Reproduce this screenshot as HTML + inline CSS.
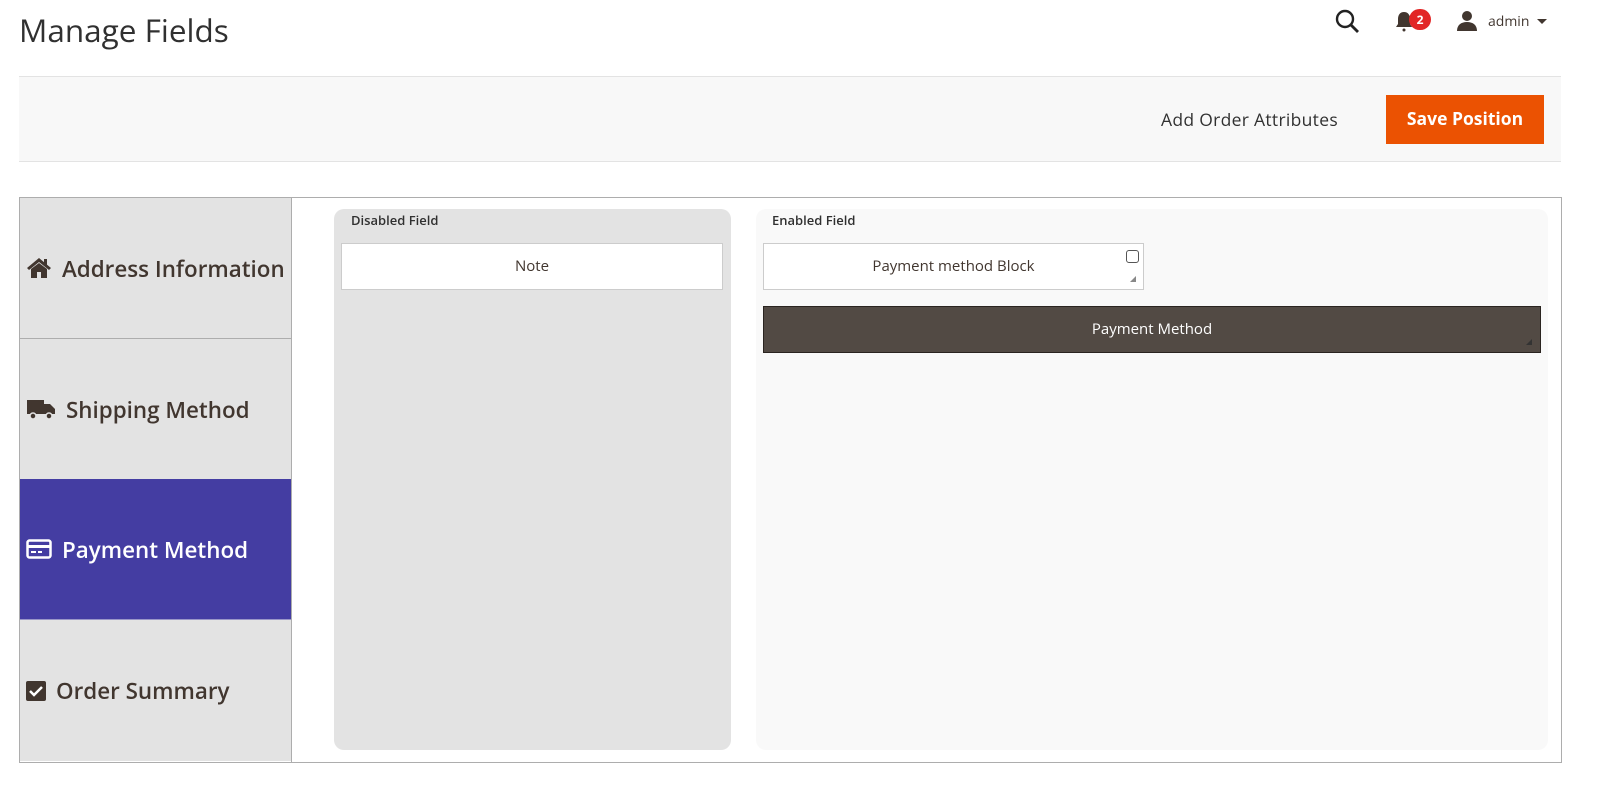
<!DOCTYPE html>
<html><head><meta charset="utf-8"><style>
*{box-sizing:border-box;margin:0;padding:0}
body{width:1600px;height:788px;background:#fff;font-family:"Open Sans","Liberation Sans",sans-serif;color:#41362f;position:relative;overflow:hidden}
.a{position:absolute}
.tab{position:absolute;left:20px;width:271px;height:141px;background:#e3e3e3;border-bottom:1px solid #adadad;display:flex;align-items:center;font-size:22.4px;font-weight:600;color:#41362f}
.tab svg{margin:0 10px 0 6px}
</style></head><body>
<div class="a" style="left:19px;top:9px;font-size:31.5px;color:#303030">Manage Fields</div>
<svg class="a" style="left:1335px;top:9px" width="26" height="26" viewBox="0 0 26 26"><circle cx="10" cy="10" r="8" fill="none" stroke="#222" stroke-width="2.4"/><path d="M16 16l7 7" stroke="#222" stroke-width="2.8"/></svg>
<svg class="a" style="left:1395px;top:11px" width="18" height="22" viewBox="0 0 18 22"><path d="M9 1c-4 0-6 3-6 7v5l-2 3h16l-2-3V8c0-4-2-7-6-7z" fill="#41362f"/><circle cx="9" cy="19" r="1.5" fill="#41362f"/></svg>
<div class="a" style="left:1409px;top:9px;width:22px;height:21px;border-radius:11px;background:#e22626;color:#fff;font-size:12px;font-weight:700;text-align:center;line-height:21px">2</div>
<svg class="a" style="left:1456px;top:10px" width="22" height="22" viewBox="0 0 22 22"><circle cx="11" cy="6" r="5" fill="#41362f"/><path d="M1 21c0-6 4-9 10-9s10 3 10 9z" fill="#41362f"/></svg>
<div class="a" style="left:1488px;top:12px;font-size:14px;color:#41362f">admin</div>
<div class="a" style="left:1537px;top:19px;border:5px solid transparent;border-top:5px solid #41362f"></div>
<div class="a" style="left:19px;top:76px;width:1542px;height:86px;background:#f8f8f8;border-top:1px solid #e3e3e3;border-bottom:1px solid #e3e3e3"></div>
<div class="a" style="left:1161px;top:108px;font-size:17.5px;color:#303030;letter-spacing:.3px">Add Order Attributes</div>
<div class="a" style="left:1386px;top:95px;width:158px;height:49px;background:#eb5202;color:#fff;font-size:17.5px;font-weight:700;text-align:center;line-height:49px">Save Position</div>
<div class="a" style="left:19px;top:197px;width:1543px;height:566px;border:1px solid #adadad"></div>
<div class="a" style="left:291px;top:198px;width:1px;height:564px;background:#adadad"></div>
<div class="tab" style="top:198px"><svg width="26" height="22" viewBox="0 0 26 22"><path d="M13 1L1 11l2 2 10-8 10 8 2-2z" fill="#41362f"/><path d="M5 12l8-6 8 6v9h-6v-6h-4v6H5z" fill="#41362f"/><rect x="18" y="2" width="3" height="6" fill="#41362f"/></svg>Address Information</div>
<div class="tab" style="top:339px"><svg width="30" height="22" viewBox="0 0 30 22"><rect x="1" y="2" width="17" height="14" fill="#41362f"/><path d="M18 6h6l5 5v5H18z" fill="#41362f"/><circle cx="7" cy="18" r="3" fill="#41362f" stroke="#e3e3e3" stroke-width="1.5"/><circle cx="23" cy="18" r="3" fill="#41362f" stroke="#e3e3e3" stroke-width="1.5"/></svg>Shipping Method</div>
<div class="tab" style="top:479px;background:#443da2;color:#fff;border-bottom:1px solid #9a97c8"><svg width="26" height="20" viewBox="0 0 26 20"><rect x="1.5" y="1.5" width="23" height="17" rx="2" fill="none" stroke="#fff" stroke-width="2.5"/><rect x="1.5" y="6" width="23" height="3" fill="#fff"/><rect x="5" y="12" width="5" height="2" fill="#fff"/><rect x="12" y="12" width="4" height="2" fill="#fff"/></svg>Payment Method</div>
<div class="tab" style="top:620px;border-bottom:none"><svg width="20" height="20" viewBox="0 0 20 20"><rect width="20" height="20" rx="2" fill="#41362f"/><path d="M4 10l4 4 8-8" fill="none" stroke="#fff" stroke-width="2.5"/></svg>Order Summary</div>
<div class="a" style="left:334px;top:209px;width:397px;height:541px;background:#e3e3e3;border-radius:10px"></div>
<div class="a" style="left:351px;top:211px;font-size:13px;font-weight:600;color:#303030">Disabled Field</div>
<div class="a" style="left:341px;top:243px;width:382px;height:47px;background:#fff;border:1px solid #ccc;text-align:center;line-height:45px;font-size:15px;color:#41362f">Note</div>
<div class="a" style="left:756px;top:209px;width:792px;height:541px;background:#f9f9f9;border-radius:10px"></div>
<div class="a" style="left:772px;top:211px;font-size:13px;font-weight:600;color:#303030">Enabled Field</div>
<div class="a" style="left:763px;top:243px;width:381px;height:47px;background:#fff;border:1px solid #ccc;text-align:center;line-height:45px;font-size:15px;color:#41362f">Payment method Block</div>
<div class="a" style="left:1126px;top:250px;width:13px;height:13px;border:1px solid #555;border-radius:3px;background:#fff"></div>
<div class="a" style="left:1130px;top:276px;border:3px solid transparent;border-right:3px solid #888;border-bottom:3px solid #888"></div>
<div class="a" style="left:763px;top:306px;width:778px;height:47px;background:#524a44;border:1px solid #2a2420;text-align:center;line-height:45px;font-size:15px;color:#fff">Payment Method</div>
<div class="a" style="left:1526px;top:339px;border:3px solid transparent;border-right:3px solid #333;border-bottom:3px solid #333"></div>
</body></html>
